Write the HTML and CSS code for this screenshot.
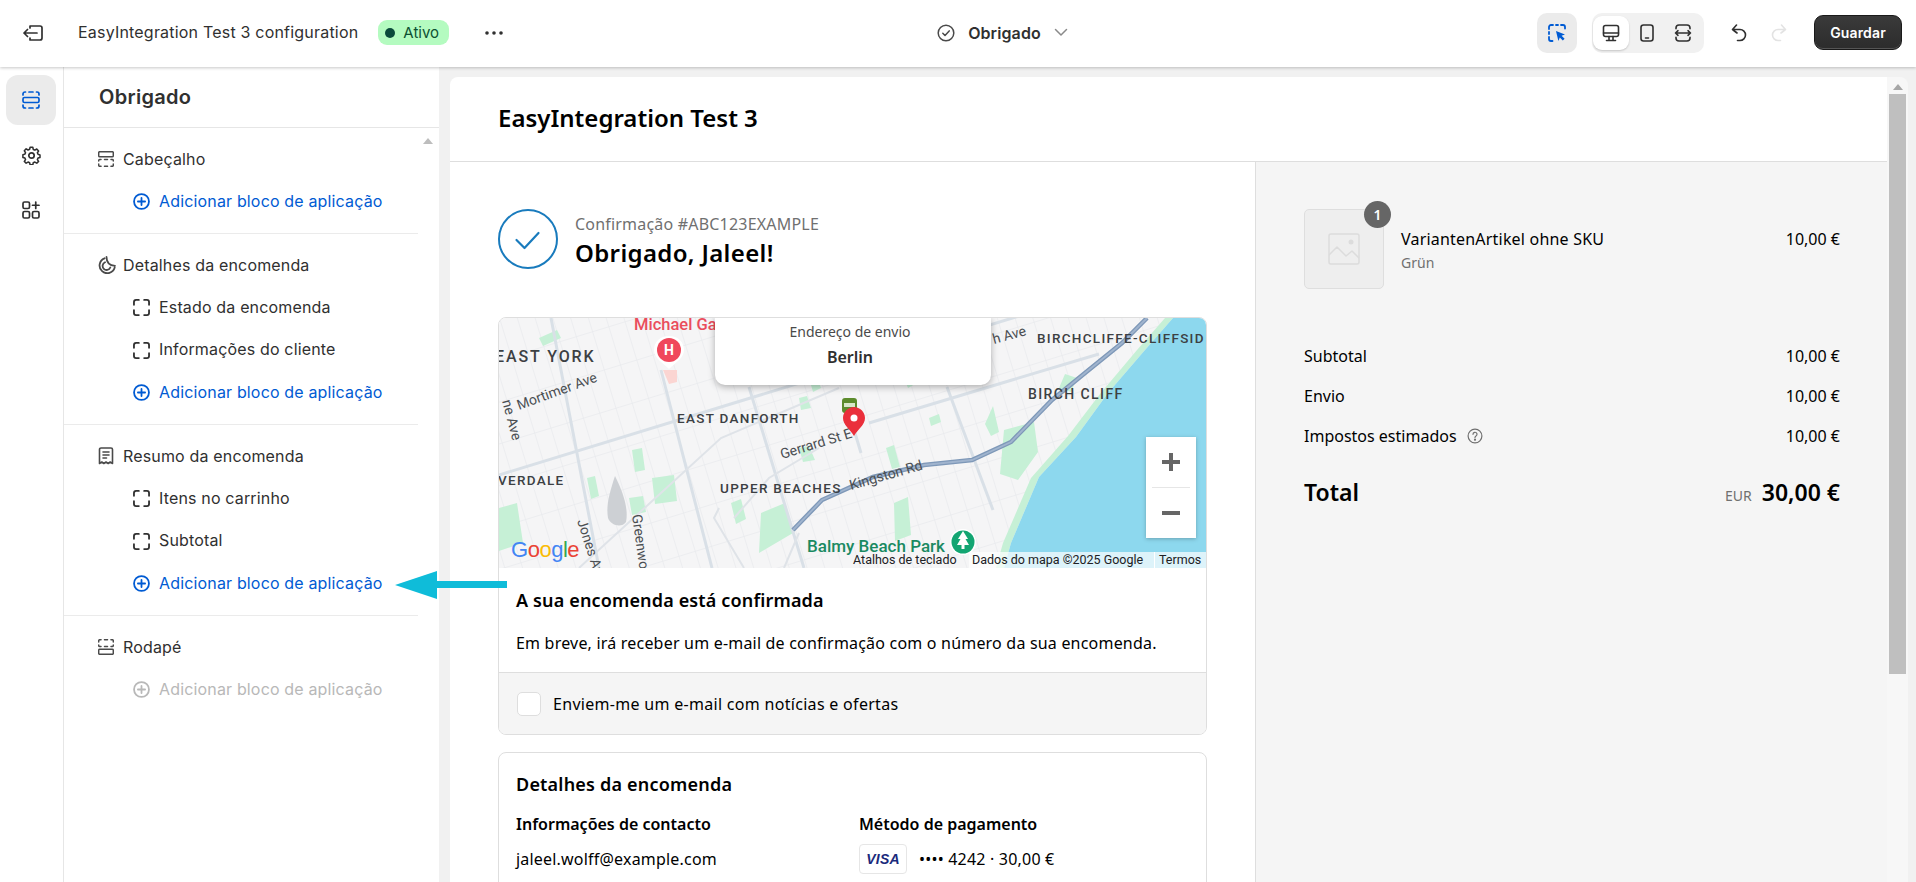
FILE: index.html
```html
<!DOCTYPE html>
<html lang="pt">
<head>
<meta charset="utf-8">
<title>EasyIntegration Test 3 configuration</title>
<link rel="stylesheet" href="styles.css">
</head>
<body>
<header class="topbar">
  <div class="top-left">
    <svg class="ic-back" width="20" height="20" viewBox="0 0 20 20" fill="none" stroke="#303030" stroke-width="1.700" stroke-linecap="round" stroke-linejoin="round"><path d="M7 3h10a2 2 0 0 1 2 2v10a2 2 0 0 1-2 2H7M14 10H1M4.500 6.500 1 10l3.500 3.500M7 3v2M7 15v2"/></svg>
    <span class="app-title">EasyIntegration Test 3 configuration</span>
    <span class="badge"><i class="badge-dot"></i>Ativo</span>
    <svg class="ic-more" width="20" height="6" viewBox="0 0 20 6" fill="#303030"><circle cx="3" cy="3" r="1.800"/><circle cx="10" cy="3" r="1.800"/><circle cx="17" cy="3" r="1.800"/></svg>
  </div>
  <div class="top-center">
    <svg width="18" height="18" viewBox="0 0 18 18" fill="none" stroke="#4a4a4a" stroke-width="1.500" stroke-linecap="round" stroke-linejoin="round"><circle cx="9" cy="9" r="7.800"/><path d="m5.800 9.300 2.200 2.200 4.200-4.600"/></svg>
    <span class="page-name">Obrigado</span>
    <svg width="14" height="9" viewBox="0 0 14 9" fill="none" stroke="#8a8a8a" stroke-width="1.500" stroke-linecap="round" stroke-linejoin="round"><path d="m1.500 1.500 5.500 5.500 5.500-5.500"/></svg>
  </div>
  <div class="top-right">
    <span class="tool-box">
      <svg width="18" height="18" viewBox="0 0 18 18" fill="none"><path d="M1 5V3a2 2 0 0 1 2-2h2M8 1h2M13 1h2a2 2 0 0 1 2 2v1.500M1 8v2M1 13v2a2 2 0 0 0 2 2h1.500" stroke="#005bd3" stroke-width="1.800" stroke-linecap="round"/><path d="M8 7l9 3.400-3.400 1.300 3 3-1.800 1.800-3-3L10.400 17z" fill="#005bd3"/></svg>
    </span>
    <span class="view-group">
      <span class="view active">
        <svg width="18" height="18" viewBox="0 0 18 18" fill="none" stroke="#303030" stroke-width="1.600" stroke-linecap="round" stroke-linejoin="round"><rect x="1.500" y="1.500" width="15" height="11" rx="2"/><path d="M1.500 9h15M7 12.500v4M11 12.500v4M4.500 16.500h9"/></svg>
      </span>
      <span class="view">
        <svg width="14" height="18" viewBox="0 0 14 18" fill="none" stroke="#303030" stroke-width="1.600" stroke-linecap="round"><rect x="1" y="1" width="12" height="16" rx="2.500"/><path d="M5.500 14h3"/></svg>
      </span>
      <span class="view">
        <svg width="18" height="18" viewBox="0 0 18 18" fill="none" stroke="#303030" stroke-width="1.600" stroke-linecap="round" stroke-linejoin="round"><path d="M2 4.800V4a3 3 0 0 1 3-3h8a3 3 0 0 1 3 3v.8M2 13.200V14a3 3 0 0 0 3 3h8a3 3 0 0 0 3-3v-.8M1.500 9h15M4 6.700 1.500 9 4 11.300M14 6.700 16.500 9 14 11.300"/></svg>
      </span>
    </span>
    <svg class="ic-undo" width="16" height="18" viewBox="0 0 16 18" fill="none" stroke="#303030" stroke-width="1.600" stroke-linecap="round" stroke-linejoin="round"><path d="M5.500 1 1.500 5.500 6 9M1.500 5.500H9a5.500 5.500 0 0 1 0 11H6.500"/></svg>
    <svg class="ic-redo" width="16" height="18" viewBox="0 0 16 18" fill="none" stroke="#e3e3e3" stroke-width="1.600" stroke-linecap="round" stroke-linejoin="round"><path d="M10.500 1l4 4.500L10 9M14.500 5.500H7a5.500 5.500 0 0 0 0 11h2.500"/></svg>
    <button class="save">Guardar</button>
  </div>
</header>

<div class="workspace">
  <nav class="rail">
    <span class="rail-item active">
      <svg width="18" height="18" viewBox="0 0 18 18" fill="none" stroke="#005bd3" stroke-width="1.700" stroke-linecap="round"><path d="M1 4V3a2 2 0 0 1 2-2h.5M7 1h4M14.500 1h.5a2 2 0 0 1 2 2v1M1 14v1a2 2 0 0 0 2 2h.5M7 17h4M14.500 17h.5a2 2 0 0 0 2-2v-1"/><rect x="1" y="6.500" width="16" height="5" rx="1.500"/></svg>
    </span>
    <span class="rail-item">
      <svg width="19" height="19" viewBox="0 0 19 19" fill="none" stroke="#303030" stroke-width="1.700" stroke-linejoin="round"><path d="M8 1.200h3l.5 2.400 1.800.8 2.100-1.300 2 2.200-1.300 2 .7 1.700 2.200.7v2.800l-2.200.7-.7 1.700 1.300 2-2 2-2.100-1.300-1.800.8-.5 2.300H8l-.5-2.300-1.800-.8-2.100 1.300-2-2 1.300-2-.7-1.700-2.200-.7V9.500l2.200-.7.7-1.700-1.300-2 2-2.200 2.100 1.300 1.800-.8z" transform="translate(.9 .2) scale(.9)"/><circle cx="9.500" cy="9.500" r="2.700"/></svg>
    </span>
    <span class="rail-item">
      <svg width="18" height="18" viewBox="0 0 18 18" fill="none" stroke="#303030" stroke-width="1.700" stroke-linecap="round"><rect x="1" y="1" width="6.500" height="6.500" rx="1.500"/><rect x="1" y="10.500" width="6.500" height="6.500" rx="1.500"/><rect x="10.500" y="10.500" width="6.500" height="6.500" rx="1.500"/><path d="M13.750 1v6.500M10.500 4.250H17"/></svg>
    </span>
  </nav>

  <aside class="panel">
    <h2 class="panel-title">Obrigado</h2>
    <div class="panel-scroll">
      <svg class="scroll-up" width="10" height="6" viewBox="0 0 10 6" fill="#bdbdbd"><path d="M5 0l5 6H0z"/></svg>
      <section class="group">
        <div class="row head">
          <svg width="16" height="16" viewBox="0 0 16 16" fill="none" stroke="#4a4a4a" stroke-width="1.500" stroke-linecap="round"><rect x=".7" y=".7" width="14.600" height="5" rx="1"/><path d="M.7 10V9.500a1 1 0 0 1 1-1H3M6.500 8.500h3M13 8.500h1.300a1 1 0 0 1 1 1v.5M.7 13v1.300a1 1 0 0 0 1 1H3M6.500 15.300h3M13 15.300h1.300a1 1 0 0 0 1-1V13"/></svg>
          <span>Cabeçalho</span>
        </div>
        <div class="row sub add"><svg class="ic-add" viewBox="0 0 18 18" fill="none" stroke="currentColor" stroke-width="1.900" stroke-linecap="round"><circle cx="9" cy="9" r="7.900"/><path d="M9 5.200v7.600M5.200 9h7.600"/></svg><span>Adicionar bloco de aplicação</span></div>
      </section>
      <section class="group">
        <div class="row head">
          <svg width="18" height="18" viewBox="0 0 18 18" fill="none" stroke="#4a4a4a" stroke-width="1.800" stroke-linecap="round"><path d="M6.500 2.300A7.700 7.700 0 1 0 16.700 11.500M7 6.300a4 4 0 1 0 5.300 5.200M8.500 1c0 5 3 8.500 8.500 8.800"/></svg>
          <span>Detalhes da encomenda</span>
        </div>
        <div class="row sub"><svg class="ic-block" viewBox="0 0 16 16" fill="none" stroke="#303030" stroke-width="1.700" stroke-linecap="round"><path d="M.9 5.500V2.900a2 2 0 0 1 2-2h2.600M10.500.9h2.600a2 2 0 0 1 2 2v2.600M.9 10.500v2.600a2 2 0 0 0 2 2h2.600M10.500 15.100h2.600a2 2 0 0 0 2-2v-2.600"/></svg><span>Estado da encomenda</span></div>
        <div class="row sub"><svg class="ic-block" viewBox="0 0 16 16" fill="none" stroke="#303030" stroke-width="1.700" stroke-linecap="round"><path d="M.9 5.500V2.900a2 2 0 0 1 2-2h2.600M10.500.9h2.600a2 2 0 0 1 2 2v2.600M.9 10.500v2.600a2 2 0 0 0 2 2h2.600M10.500 15.100h2.600a2 2 0 0 0 2-2v-2.600"/></svg><span>Informações do cliente</span></div>
        <div class="row sub add"><svg class="ic-add" viewBox="0 0 18 18" fill="none" stroke="currentColor" stroke-width="1.900" stroke-linecap="round"><circle cx="9" cy="9" r="7.900"/><path d="M9 5.200v7.600M5.200 9h7.600"/></svg><span>Adicionar bloco de aplicação</span></div>
      </section>
      <section class="group">
        <div class="row head">
          <svg width="16" height="18" viewBox="0 0 16 18" fill="none" stroke="#4a4a4a" stroke-width="1.600" stroke-linecap="round" stroke-linejoin="round"><path d="M1.500 16.500V2.500a1.500 1.500 0 0 1 1.500-1.500h10a1.500 1.500 0 0 1 1.500 1.500v14l-2.300-1.500-2 1.500-2.200-1.500-2.200 1.500-2-1.500zM5 5h6M5 8h6M5 11h3.500"/></svg>
          <span>Resumo da encomenda</span>
        </div>
        <div class="row sub"><svg class="ic-block" viewBox="0 0 16 16" fill="none" stroke="#303030" stroke-width="1.700" stroke-linecap="round"><path d="M.9 5.500V2.900a2 2 0 0 1 2-2h2.600M10.500.9h2.600a2 2 0 0 1 2 2v2.600M.9 10.500v2.600a2 2 0 0 0 2 2h2.600M10.500 15.100h2.600a2 2 0 0 0 2-2v-2.600"/></svg><span>Itens no carrinho</span></div>
        <div class="row sub"><svg class="ic-block" viewBox="0 0 16 16" fill="none" stroke="#303030" stroke-width="1.700" stroke-linecap="round"><path d="M.9 5.500V2.900a2 2 0 0 1 2-2h2.600M10.500.9h2.600a2 2 0 0 1 2 2v2.600M.9 10.500v2.600a2 2 0 0 0 2 2h2.600M10.500 15.100h2.600a2 2 0 0 0 2-2v-2.600"/></svg><span>Subtotal</span></div>
        <div class="row sub add"><svg class="ic-add" viewBox="0 0 18 18" fill="none" stroke="currentColor" stroke-width="1.900" stroke-linecap="round"><circle cx="9" cy="9" r="7.900"/><path d="M9 5.200v7.600M5.200 9h7.600"/></svg><span>Adicionar bloco de aplicação</span></div>
      </section>
      <section class="group last">
        <div class="row head">
          <svg width="16" height="16" viewBox="0 0 16 16" fill="none" stroke="#4a4a4a" stroke-width="1.500" stroke-linecap="round"><rect x=".7" y="10.300" width="14.600" height="5" rx="1"/><path d="M.7 3V1.700a1 1 0 0 1 1-1H3M6.500.7h3M13 .7h1.300a1 1 0 0 1 1 1V3M.7 6v.5a1 1 0 0 0 1 1H3M6.500 7.500h3M13 7.500h1.300a1 1 0 0 0 1-1V6"/></svg>
          <span>Rodapé</span>
        </div>
        <div class="row sub add off"><svg class="ic-add" viewBox="0 0 18 18" fill="none" stroke="currentColor" stroke-width="1.900" stroke-linecap="round"><circle cx="9" cy="9" r="7.900"/><path d="M9 5.200v7.600M5.200 9h7.600"/></svg><span>Adicionar bloco de aplicação</span></div>
      </section>
    </div>
  </aside>

  <main class="canvas">
    <div class="sheet">
      <header class="shop-head">EasyIntegration Test 3</header>
      <div class="columns">
        <div class="main-col">
          <div class="thanks">
            <svg width="60" height="60" viewBox="0 0 60 60" fill="none" stroke="#197bbd" stroke-width="2"><circle cx="30" cy="30" r="29"/><path d="M18.500 31l8 8 14-15" stroke-width="2.200" stroke-linecap="round" stroke-linejoin="round"/></svg>
            <div class="thanks-text">
              <p class="conf">Confirmação #ABC123EXAMPLE</p>
              <h1 class="hello">Obrigado, Jaleel!</h1>
            </div>
          </div>

          <section class="card">
            <div class="map">
              <svg class="map-art" width="710" height="250" viewBox="0 0 710 250">
                <defs>
                  <pattern id="blocks" width="17" height="40" patternUnits="userSpaceOnUse" patternTransform="rotate(-17)">
                    <path d="M0 0H17M0 0V40" fill="none" stroke="#e4e6ea" stroke-width="1"/>
                  </pattern>
                </defs>
                <rect width="710" height="250" fill="#f5f5f6"/>
                <rect width="710" height="250" fill="url(#blocks)"/>
                <g fill="#c6f0d6">
                  <path d="M153 160l22-3 3 26-22 3zM130 180l14-2 3 16-14 3zM0 190l18-5 6 40-24 8zM88 160l8-2 4 20-8 3zM133 132l10-2 3 22-10 2zM232 185l10-4 5 20-10 5zM262 195l24-10 8 30-34 20zM387 130l8-3 6 22-8 2zM395 185l14-6 3 38-16 6zM486 106l8-18 6 26-8 4zM505 112l30-8 4 30-20 28-18-6z"/>
                  <path d="M310 60l8-2 4 12-8 4zM405 60l14-8 4 10-14 8zM430 100l10-4 2 8-10 4zM300 80l8-2 4 12-10 2zM40 20l18-8 4 8-18 8zM300 130l10-2 6 14-12 2zM560 70l6-14 12 4-6 14z"/>
                  <path d="M666 0 638 32 601 76 569 118 532 160 504 225 497 250H505L512 225 540 159 577 119 609 75 646 32 674 0z"/>
                </g>
                <path d="M674 0 646 32 609 75 577 119 540 159 512 225 505 250H710V0z" fill="#8dd8ee"/>
                <g fill="none" stroke="#d9e0e7" stroke-width="3">
                  <path d="M0 157 235 85 530 -5"/>
                  <path d="M52 0 100 250M162 52 213 250M250 69 305 250M448 69 494 192M460 0 480 60M350 95 362 135"/>
                  <path d="M370 105 513 62 600 36"/>
                </g>
                <g fill="none" stroke="#dfe3e8" stroke-width="2">
                  <path d="M80 250 222 120 340 70M320 130 270 160 235 200"/>
                  <path d="M220 190 215 200 245 250M285 250 300 215"/>
                </g>
                <path d="M294 212 323 182 374 159 425 147 473 142 512 124 553 82 586 55 623 25 648 0" fill="none" stroke="#7e98b8" stroke-width="4.500"/>
                <path d="M294 212 323 182 374 159 425 147 473 142 512 124 553 82 586 55 623 25 648 0" fill="none" stroke="#a0b4ce" stroke-width="1.800"/>
                <path d="M116 158c-6 18-9 30-7 42 3 8 14 10 18 4 3-14-4-32-11-46z" fill="#cdd0d4"/>
                <path d="M164 52h14v12l-8 2z" fill="#fbd5d2"/>
                <g class="m-dist">
                  <text class="m-big" x="-4" y="44">EAST YORK</text>
                  <text x="178" y="105">EAST DANFORTH</text>
                  <text x="538" y="25">BIRCHCLIFFE-CLIFFSID</text>
                  <text class="m-mid" x="529" y="81">BIRCH CLIFF</text>
                  <text x="-1" y="167">VERDALE</text>
                  <text x="221" y="175">UPPER BEACHES</text>
                </g>
                <g class="m-st">
                  <text transform="translate(20 92) rotate(-20)">Mortimer Ave</text>
                  <text transform="translate(283 141) rotate(-17)">Gerrard St E</text>
                  <text transform="translate(352 172) rotate(-16)">Kingston Rd</text>
                  <text transform="translate(495 26) rotate(-15)">h Ave</text>
                  <text transform="translate(3 83) rotate(75)">ne Ave</text>
                  <text transform="translate(133 197) rotate(82)">Greenwo</text>
                  <text transform="translate(78 203) rotate(72)">Jones Av</text>
                </g>
                <text class="m-hosp" x="135" y="12">Michael Garron</text>
                <text class="m-park" x="308" y="234">Balmy Beach Park</text>
                <circle cx="464" cy="224" r="13" fill="#fff"/>
                <circle cx="464" cy="224" r="11.500" fill="#13a572"/>
                <path d="M464 213l5 8h-2.500l3.500 6h-4.500v4h-3v-4H458l3.500-6H459z" fill="#fff"/>
                <path d="M170 18c-9 0-15 6-15 14 0 8 8 12 15 19 7-7 15-11 15-19 0-8-6-14-15-14z" fill="#fff"/>
                <circle cx="170" cy="32" r="12" fill="#f0475b"/>
                <text class="m-h" x="170" y="37">H</text>
                <rect x="343" y="80" width="15" height="15" rx="3" fill="#5c8b2c"/>
                <path d="M345 85h11v4h-11z" fill="#d8e7c8"/>
                <path d="M355 89c-6 0-11 5-11 11 0 7 7 11 11 18 4-7 11-11 11-18 0-6-5-11-11-11z" fill="#ea2f3b"/>
                <circle cx="355" cy="100" r="3.500" fill="#fff"/>
                <text class="m-g" x="12" y="239"><tspan fill="#4285f4">G</tspan><tspan fill="#ea4335">o</tspan><tspan fill="#fbbc05">o</tspan><tspan fill="#4285f4">g</tspan><tspan fill="#34a853">l</tspan><tspan fill="#ea4335">e</tspan></text>
                <path d="M470 234H710V250H470z" fill="#fff" fill-opacity=".7"/>
                <path d="M655.500 234V250" stroke="#fff"/>
                <g class="m-foot">
                  <text x="354" y="246">Atalhos de teclado</text>
                  <text x="473" y="246">Dados do mapa ©2025 Google</text>
                  <text x="660" y="246">Termos</text>
                </g>
              </svg>
              <div class="map-pop">
                <span class="pop-label">Endereço de envio</span>
                <strong class="pop-city">Berlin</strong>
              </div>
              <div class="zoom-ctl">
                <span class="zoom-btn"><svg width="18" height="18" viewBox="0 0 18 18" fill="#666"><path d="M7 0h4v7h7v4h-7v7H7v-7H0V7h7z"/></svg></span>
                <span class="zoom-sep"></span>
                <span class="zoom-btn"><svg width="18" height="4" viewBox="0 0 18 4" fill="#666"><path d="M0 0h18v4H0z"/></svg></span>
              </div>
            </div>
            <div class="confirm">
              <h3 class="confirm-h">A sua encomenda está confirmada</h3>
              <p class="confirm-p">Em breve, irá receber um e-mail de confirmação com o número da sua encomenda.</p>
            </div>
            <label class="news"><span class="check"></span><span>Enviem-me um e-mail com notícias e ofertas</span></label>
          </section>

          <section class="card details">
            <h3 class="details-h">Detalhes da encomenda</h3>
            <div class="details-grid">
              <div>
                <h4 class="det-sub">Informações de contacto</h4>
                <p class="det-val">jaleel.wolff@example.com</p>
              </div>
              <div>
                <h4 class="det-sub">Método de pagamento</h4>
                <p class="det-val pay"><span class="visa">VISA</span>•••• 4242 · 30,00 €</p>
              </div>
            </div>
          </section>
        </div>

        <aside class="summary">
          <div class="item">
            <div class="thumb">
              <svg width="32" height="32" viewBox="0 0 32 32" fill="none" stroke="#dcdcdc" stroke-width="1.500" stroke-linejoin="round"><rect x="1" y="1" width="30" height="30" rx="2"/><path d="M1 22l8-8 9 9 6-5 7 7"/><circle cx="23" cy="9" r="2.500" fill="#dcdcdc" stroke="none"/></svg>
              <span class="qty">1</span>
            </div>
            <div class="item-info">
              <p class="item-name">VariantenArtikel ohne SKU</p>
              <p class="item-var">Grün</p>
            </div>
            <span class="item-price">10,00 €</span>
          </div>
          <div class="totals">
            <div class="line"><span>Subtotal</span><span>10,00 €</span></div>
            <div class="line"><span>Envio</span><span>10,00 €</span></div>
            <div class="line"><span class="tax">Impostos estimados
              <svg width="16" height="16" viewBox="0 0 16 16" fill="none" stroke="#707070" stroke-width="1.200" stroke-linecap="round"><circle cx="8" cy="8" r="6.900"/><path d="M6 6.300a2 2 0 1 1 3 1.700c-.7.400-1 .8-1 1.500"/><circle cx="8" cy="11.700" r=".5" fill="#707070"/></svg>
            </span><span>10,00 €</span></div>
            <div class="line grand"><span>Total</span><span class="grand-val"><small>EUR</small>30,00 €</span></div>
          </div>
        </aside>
      </div>
    </div>
    <div class="sbar">
      <svg width="10" height="6" viewBox="0 0 10 6" fill="#a6a6a6"><path d="M5 0l5 6H0z"/></svg>
      <span class="sbar-thumb"></span>
    </div>
  </main>
</div>

<svg class="callout" width="112" height="28" viewBox="0 0 112 28" fill="#0fbcd9"><path d="M0 14 42 0V10H112V17H42V28z"/></svg>
</body>
</html>
```

FILE: styles.css
```css
* { box-sizing: border-box; }
html, body { margin: 0; height: 100%; overflow: hidden; }
body { font-family: Inter, "Noto Sans", sans-serif; color: #303030; background: #f1f1f1; font-size: 14px; display: flex; flex-direction: column; }
h1, h2, h3, h4, p { margin: 0; }

/* top bar */
.topbar { height: 67px; flex: none; background: #fff; display: grid; grid-template-columns: 1fr auto 1fr; align-items: center; padding: 0 14px 2px 23px; box-shadow: 0 1px 3px rgba(0,0,0,.22); position: relative; z-index: 2; }
.top-left { display: flex; align-items: center; }
.app-title { margin-left: 35px; font-size: 16px; letter-spacing: .2px; position: relative; top: -1px; white-space: nowrap; }
.badge { margin-left: 20px; height: 25px; width: 71px; border-radius: 9px; background: #b4fbc0; color: #0c5132; font-size: 15px; display: flex; align-items: center; padding-left: 7px; gap: 8px; }
.badge-dot { width: 10px; height: 10px; border-radius: 50%; background: #0a4a3a; }
.ic-more { margin-left: 35px; }
.top-center { display: flex; align-items: center; gap: 13px; margin-left: 80px; }
.page-name { font-size: 16px; font-weight: 600; letter-spacing: .1px; }
.top-right { display: flex; align-items: center; justify-content: flex-end; }
.tool-box { width: 40px; height: 40px; border-radius: 10px; background: #ebebeb; display: flex; align-items: center; justify-content: center; }
.view-group { margin-left: 15px; height: 40px; width: 112px; border-radius: 10px; background: #f1f1f1; display: flex; align-items: center; padding: 3px 1px; }
.view { width: 36px; height: 34px; display: flex; align-items: center; justify-content: center; border-radius: 9px; }
.view.active { background: #fff; box-shadow: 0 1px 2px rgba(0,0,0,.18); }
.ic-undo { margin-left: 27px; }
.ic-redo { margin-left: 24px; }
.save { margin-left: 27px; width: 88px; height: 35px; border-radius: 9px; border: 1px solid #1a1a1a; background: linear-gradient(#3a3a3a, #2c2c2c); color: #fff; font: 600 14px Inter, sans-serif; letter-spacing: .15px; padding: 0; box-shadow: inset 0 -1px 0 #555; }

/* workspace */
.workspace { flex: 1; min-height: 0; display: flex; }
.rail { width: 64px; flex: none; background: #fff; border-right: 1px solid #e6e6e6; display: flex; flex-direction: column; gap: 5px; padding: 8px 6px 0; }
.rail-item { width: 50px; height: 50px; border-radius: 12px; display: flex; align-items: center; justify-content: center; }
.rail-item.active { background: #ebebeb; }

.panel { width: 375px; flex: none; background: #fff; display: flex; flex-direction: column; }
.panel-title { height: 61px; flex: none; border-bottom: 1px solid #e6e6e6; font-size: 20px; letter-spacing: .3px; font-weight: 600; padding: 0 0 0 35px; display: flex; align-items: center; }
.panel-scroll { position: relative; flex: 1; }
.scroll-up { position: absolute; right: 6px; top: 10px; }
.group { margin-right: 21px; padding: 10px 0; border-bottom: 1px solid #ebebeb; }
.group.last { border-bottom: 0; }
.row { height: 42.500px; display: flex; align-items: center; font-size: 16px; letter-spacing: .16px; white-space: nowrap; }
.row.head { padding-left: 34px; position: relative; }
.row.head svg { position: absolute; left: 34px; }
.row.head span { margin-left: 25px; }
.row.sub { padding-left: 69px; gap: 9px; }
.row.sub span { position: relative; top: -1px; }
.ic-block, .ic-add { width: 17px; height: 17px; flex: none; }
.row.add { color: #005bd3; }
.row.add.off { color: #b8b8b8; }

/* canvas */
.canvas { flex: 1; min-width: 0; display: flex; padding: 10px 8px 0 11px; }
.sheet { flex: 1; min-width: 0; background: #fff; border-radius: 8px 0 0 0; display: flex; flex-direction: column; overflow: hidden; font-family: "Noto Sans", sans-serif; color: #000; }
.sbar { width: 21px; flex: none; background: #f7f7f7; border-radius: 0 8px 0 0; display: flex; flex-direction: column; align-items: center; padding-top: 7px; gap: 4px; }
.sbar-thumb { width: 17px; height: 580px; background: #bfbfbf; }
.shop-head { height: 85px; flex: none; border-bottom: 1px solid #dedede; padding: 0 48px 3px; display: flex; align-items: center; font-size: 24px; font-weight: 600; }
.columns { flex: 1; min-height: 0; display: flex; }
.main-col { width: 806px; flex: none; padding: 47px 48px 0; border-right: 1px solid #dedede; }
.thanks { display: flex; align-items: center; gap: 17px; height: 60px; margin-bottom: 48px; }
.thanks-text { padding-top: 3px; }
.conf { font-size: 16px; letter-spacing: .2px; color: #707070; line-height: 24px; }
.hello { font-size: 24px; letter-spacing: .35px; font-weight: 600; line-height: 34px; }
.card { border: 1px solid #dedede; border-radius: 8px; overflow: hidden; }
.map { position: relative; height: 250px; border-bottom: 1px solid #dedede; }
.map-art { display: block; }
.m-dist text { font: 500 13.500px Roboto, sans-serif; letter-spacing: 1.300px; fill: #3c4043; }
.m-dist .m-big { font-size: 16px; letter-spacing: 1.900px; }
.m-dist .m-mid { font-size: 14px; letter-spacing: 1.400px; }
.m-st text { font: 14px Roboto, sans-serif; fill: #4a4e52; }
.m-hosp { font: 500 16.500px Roboto, sans-serif; fill: #ea4d5c; }
.m-park { font: 500 17px Roboto, sans-serif; fill: #1a8a62; }
.m-h { font: 700 14px Roboto, sans-serif; fill: #fff; text-anchor: middle; }
.m-g { font: 500 22px "Liberation Sans", sans-serif; letter-spacing: -.5px; }
.m-foot text { font: 12.500px Roboto, sans-serif; fill: #202124; }
.map-pop { position: absolute; left: 216px; top: 0; width: 276px; height: 67px; background: #fff; border-radius: 0 0 10px 10px; box-shadow: 0 2px 7px rgba(0,0,0,.3); display: flex; flex-direction: column; align-items: center; padding: 2px 6px 0 0; color: #303030; }
.pop-label { font-size: 14px; line-height: 24px; color: #4a4a4a; }
.pop-city { font-size: 16px; font-weight: 600; line-height: 26px; }
.zoom-ctl { position: absolute; left: 647px; top: 119px; width: 50px; height: 101px; background: #fff; box-shadow: 0 1px 4px rgba(0,0,0,.25); display: flex; flex-direction: column; align-items: center; }
.zoom-btn { flex: 1; width: 100%; display: flex; align-items: center; justify-content: center; }
.zoom-sep { width: 38px; height: 1px; background: #e6e6e6; }
.confirm { height: 104px; padding: 20px 17px 0; }
.confirm-h { font-size: 18px; letter-spacing: .15px; font-weight: 600; line-height: 24px; }
.confirm-p { font-size: 16px; letter-spacing: .2px; line-height: 24px; margin-top: 19px; white-space: nowrap; }
.news { height: 62px; background: #f5f5f5; border-top: 1px solid #dedede; display: flex; align-items: center; padding: 0 18px; gap: 12px; font-size: 16px; letter-spacing: .3px; }
.check { width: 24px; height: 24px; border-radius: 5px; background: #fff; border: 1px solid #dedede; }
.details { margin-top: 17px; padding: 19px 17px 0; height: 200px; }
.details-h { font-size: 18px; letter-spacing: .2px; font-weight: 600; line-height: 24px; }
.details-grid { display: grid; grid-template-columns: 343px 1fr; margin-top: 16px; }
.det-sub { font-size: 16px; font-weight: 600; line-height: 24px; }
.det-val { font-size: 16px; letter-spacing: .2px; line-height: 30px; margin-top: 8px; white-space: nowrap; }
.pay { display: flex; align-items: center; gap: 12px; }
.visa { width: 48px; height: 30px; border: 1px solid #e6e6e6; border-radius: 4px; display: flex; align-items: center; justify-content: center; font: italic 700 14px "Liberation Sans", sans-serif; color: #1a2a7c; }

.summary { flex: 1; min-width: 0; background: #f5f5f5; padding: 47px 47px 0 48px; }
.item { display: flex; align-items: flex-start; height: 80px; }
.thumb { position: relative; width: 80px; height: 80px; flex: none; background: #eeeeee; border: 1px solid #dedede; border-radius: 5px; display: flex; align-items: center; justify-content: center; }
.qty { position: absolute; right: -8px; top: -9px; width: 27px; height: 27px; border-radius: 50%; background: #666; color: #fff; font-size: 14px; font-weight: 600; display: flex; align-items: center; justify-content: center; }
.item-info { flex: 1; margin-left: 17px; padding-top: 18px; }
.item-name { font-size: 16px; letter-spacing: .2px; line-height: 24px; }
.item-var { font-size: 14px; line-height: 24px; color: #707070; }
.item-price { font-size: 16px; line-height: 24px; padding-top: 18px; }
.totals { margin-top: 47px; }
.line { height: 40px; display: flex; align-items: center; justify-content: space-between; font-size: 16px; }
.tax { display: flex; align-items: center; gap: 10px; }
.grand { height: 58px; margin-top: 7px; font-size: 23px; font-weight: 600; }
.grand-val { display: flex; align-items: baseline; gap: 10px; }
.grand-val small { font-size: 14px; font-weight: 400; color: #707070; }

.callout { position: absolute; left: 395px; top: 571px; }
```
